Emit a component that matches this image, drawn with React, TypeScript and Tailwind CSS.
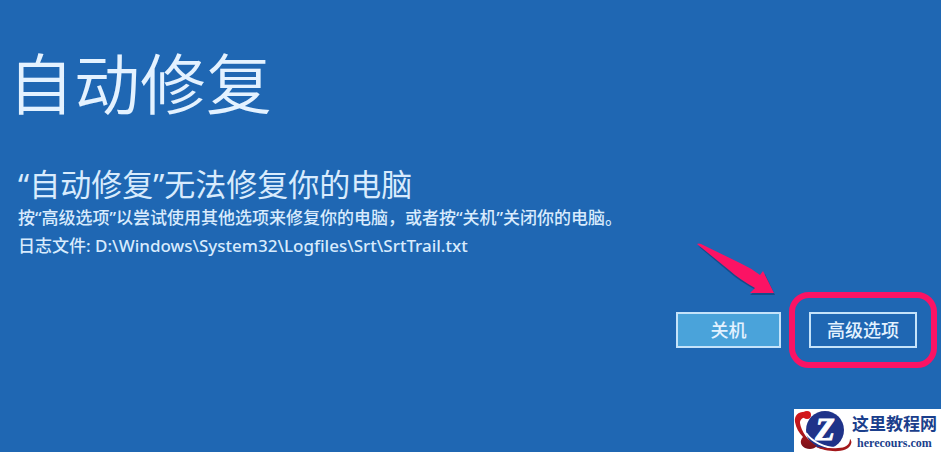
interface LogoProps {
  className?: string;
}

function SiteLogo({ className }: LogoProps) {
  return (
    <svg viewBox="0 0 58 43" className={className} aria-hidden="true">
      <defs>
        <linearGradient id="orbit" x1="0" y1="0" x2="0" y2="1">
          <stop offset="0" stopColor="#d4161c" />
          <stop offset="0.5" stopColor="#b5171b" />
          <stop offset="1" stopColor="#74121a" />
        </linearGradient>
      </defs>
      <circle cx="31" cy="21" r="19" fill="#1f3389" />
      <text
        x="31"
        y="31"
        textAnchor="middle"
        fill="#fff"
        stroke="#fff"
        strokeWidth="1"
        fontSize="32"
        fontWeight="700"
        fontStyle="italic"
        fontFamily="Liberation Serif, serif"
      >
        Z
      </text>
      <path d="M12 24C18 33 31 39 42 39c8 0 13-3 14-8" fill="none" stroke="#fff" strokeWidth="2" />
      <path
        d="M13 3C5 2 0 6 1 13c1 6 4 11 8 15-4 4-2 9 2 11 5 2 9 1 12-2C14 32 7 22 6 14c0-4 3-6 7-5z"
        fill="url(#orbit)"
      />
      <path d="M22 38c10 5 32 7 35-3 1-2 0-4-1-5 0 6-5 9-12 9-8 1-15-1-22-1z" fill="#a3181b" />
      <circle cx="13" cy="6" r="4" fill="#d4161c" />
    </svg>
  );
}

function Arrow({ className }: LogoProps) {
  return (
    <svg viewBox="0 0 82 58" className={className} aria-hidden="true">
      <path d="M2 4L46 24Q57 31 66 37L69 32L79 53L54 53L60 48Q43 39 33 30z" fill="#0d3a70" opacity="0.6" />
      <path d="M1 2Q3 1 5 2L44 21Q55 26 64 33L67 29L78 51L54 51L59 46Q43 37 33 28z" fill="#fb1364" />
    </svg>
  );
}

const buttonClass = 'h-9 border-2 border-[#c5e3fa] text-lg font-medium leading-none text-[#e3f2ff]';

export default function App() {
  return (
    <div className="flex min-h-screen flex-col bg-[#1f67b3] font-['Noto_Sans','Noto_Sans_CJK_SC',sans-serif] text-[#d8ebfd]">
      <main className="pt-8">
        <h1 className="px-2 font-['Noto_Sans_CJK_SC',sans-serif] text-[66px] font-[350] leading-[96px] text-[#e4f2ff]">
          自动修复
        </h1>
        <div className="mt-9 px-[18px]">
          <h2 className="text-[31px] font-normal leading-10">“自动修复”无法修复你的电脑</h2>
          <p className="text-[17px] font-medium leading-7">
            按“高级选项”以尝试使用其他选项来修复你的电脑，或者按“关机”关闭你的电脑。
          </p>
          <p className="text-[17px] font-medium leading-7">
            日志文件: D:\Windows\System32\Logfiles\Srt\SrtTrail.txt
          </p>
        </div>
      </main>

      <div className="mt-8 flex items-center justify-end gap-2 pr-1">
        <div className="relative">
          <Arrow className="absolute -top-[70px] left-5 h-[58px] w-[82px]" />
          <button type="button" className={`${buttonClass} w-[105px] bg-[#4aa3da]`}>
            关机
          </button>
        </div>
        <div className="rounded-[20px] border-[6px] border-[#fb1364] px-3.5 py-3.5">
          <button type="button" className={`${buttonClass} w-[108px]`}>
            高级选项
          </button>
        </div>
      </div>

      <footer className="mt-auto flex justify-end">
        <a href="#" className="flex h-[43px] w-[147px] items-center bg-white">
          <SiteLogo className="h-[43px] w-[58px] shrink-0" />
          <span className="flex flex-col items-center whitespace-nowrap text-[#1b3f8c]">
            <span className="font-['Noto_Sans_CJK_SC',sans-serif] text-[17px] font-bold leading-6">这里教程网</span>
            <span className="font-['Liberation_Serif',serif] text-xs font-bold leading-4">herecours.com</span>
          </span>
        </a>
      </footer>
    </div>
  );
}
